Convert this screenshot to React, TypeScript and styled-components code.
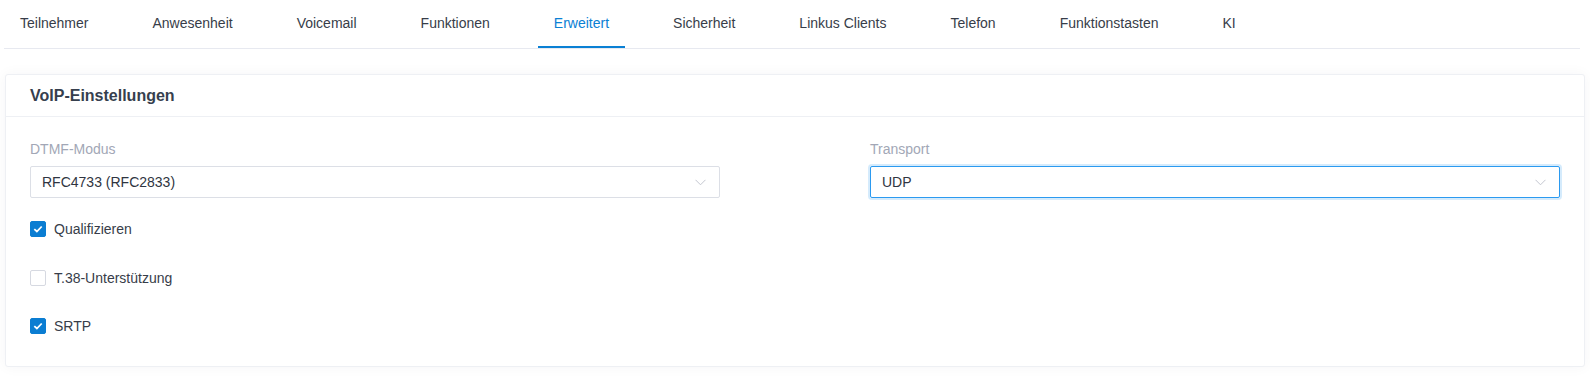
import React, { useState } from 'react';
import styled, { createGlobalStyle } from 'styled-components';

const GlobalStyle = createGlobalStyle`
  body {
    margin: 0;
    background: #ffffff;
    font-family: "Liberation Sans", Arial, Helvetica, sans-serif;
    color: #333a46;
  }
`;

const tabs = [
  'Teilnehmer',
  'Anwesenheit',
  'Voicemail',
  'Funktionen',
  'Erweitert',
  'Sicherheit',
  'Linkus Clients',
  'Telefon',
  'Funktionstasten',
  'KI',
];

const Page = styled.div`
  padding: 0 5px 16px 4px;
`;

const TabNav = styled.nav`
  display: flex;
  gap: 32px;
  height: 48px;
  margin-right: 5px;
  border-bottom: 1px solid #e7e9f0;
`;

const Tab = styled.div<{ $active?: boolean }>`
  display: flex;
  align-items: center;
  padding: 0 16px;
  font-size: 14px;
  color: ${p => (p.$active ? '#0a80d4' : '#373d49')};
  border-bottom: 2px solid ${p => (p.$active ? '#0a80d4' : 'transparent')};
  cursor: pointer;
  white-space: nowrap;
`;

const Card = styled.section`
  margin: 25px 0 0 1px;
  background: #fff;
  border: 1px solid #eef0f4;
  border-radius: 3px;
  box-shadow: 0 0 14px rgba(30, 40, 80, 0.045);
`;

const CardHeader = styled.header`
  height: 41px;
  display: flex;
  align-items: center;
  padding: 0 24px;
  border-bottom: 1px solid #eef0f4;
`;

const CardTitle = styled.h2`
  margin: 0;
  font-size: 16px;
  font-weight: bold;
  color: #363f4e;
`;

const CardBody = styled.div`
  padding: 22px 24px 29px;
`;

const FieldRow = styled.div`
  display: flex;
  justify-content: space-between;
`;

const Field = styled.div`
  width: 45.1%;
  display: flex;
  flex-direction: column;
  gap: 7px;
`;

const Label = styled.label`
  font-size: 14px;
  line-height: 20px;
  color: #a2a7b6;
`;

const SelectBox = styled.div<{ $focused?: boolean }>`
  height: 32px;
  box-sizing: border-box;
  display: flex;
  align-items: center;
  justify-content: space-between;
  padding: 0 13px 0 11px;
  border: 1px solid ${p => (p.$focused ? '#2b9af0' : '#dcdfe6')};
  border-radius: 2px;
  box-shadow: ${p => (p.$focused ? '0 0 0 2px rgba(43, 154, 240, 0.2)' : 'none')};
  font-size: 14px;
  color: #2f3541;
  cursor: pointer;
`;

const Chevron = () => (
  <svg width="11" height="7" viewBox="0 0 11 7" fill="none">
    <path d="M0.5 0.8 L5.5 5.8 L10.5 0.8" stroke="#c3c6cf" strokeWidth="1" />
  </svg>
);

const CheckList = styled.div`
  display: flex;
  flex-direction: column;
  gap: 26.5px;
  margin-top: 20px;
`;

const CheckRow = styled.label`
  display: flex;
  align-items: center;
  gap: 8px;
  height: 22px;
  font-size: 14px;
  color: #373d49;
  cursor: pointer;
`;

const Box = styled.span<{ $checked: boolean }>`
  width: 16px;
  height: 16px;
  box-sizing: border-box;
  border-radius: 2px;
  border: 1px solid ${p => (p.$checked ? '#0b7dd2' : '#d6d9e1')};
  background: ${p => (p.$checked ? '#0b7dd2' : '#fff')};
  display: flex;
  align-items: center;
  justify-content: center;
`;

const Checkbox: React.FC<{ checked: boolean; label: string; onToggle: () => void }> = ({
  checked,
  label,
  onToggle,
}) => (
  <CheckRow onClick={onToggle}>
    <Box $checked={checked}>
      {checked && (
        <svg width="10" height="8" viewBox="0 0 10 8" fill="none">
          <path d="M1.3 4.1 L3.9 6.5 L8.7 1.5" stroke="#fff" strokeWidth="1.8" />
        </svg>
      )}
    </Box>
    {label}
  </CheckRow>
);

export default function App() {
  const [checks, setChecks] = useState({ qual: true, t38: false, srtp: true });
  const toggle = (k: keyof typeof checks) => setChecks(c => ({ ...c, [k]: !c[k] }));

  return (
    <Page>
      <GlobalStyle />
      <TabNav>
        {tabs.map(t => (
          <Tab key={t} $active={t === 'Erweitert'}>
            {t}
          </Tab>
        ))}
      </TabNav>

      <Card>
        <CardHeader>
          <CardTitle>VoIP-Einstellungen</CardTitle>
        </CardHeader>
        <CardBody>
          <FieldRow>
            <Field>
              <Label>DTMF-Modus</Label>
              <SelectBox>
                RFC4733 (RFC2833)
                <Chevron />
              </SelectBox>
            </Field>
            <Field>
              <Label>Transport</Label>
              <SelectBox $focused>
                UDP
                <Chevron />
              </SelectBox>
            </Field>
          </FieldRow>
          <CheckList>
            <Checkbox checked={checks.qual} label="Qualifizieren" onToggle={() => toggle('qual')} />
            <Checkbox checked={checks.t38} label="T.38-Unterstützung" onToggle={() => toggle('t38')} />
            <Checkbox checked={checks.srtp} label="SRTP" onToggle={() => toggle('srtp')} />
          </CheckList>
        </CardBody>
      </Card>
    </Page>
  );
}
